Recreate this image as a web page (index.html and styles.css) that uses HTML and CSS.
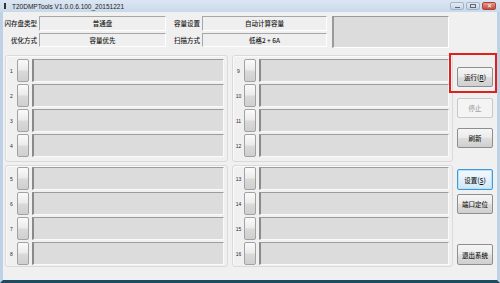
FILE: index.html
```html
<!DOCTYPE html>
<html lang="zh-CN">
<head>
  <meta charset="UTF-8">
  <title>T20DMPTools</title>
  <link rel="stylesheet" href="styles.css">
</head>
<body>
  <div class="window">
    <!-- barra de titulo -->
    <div class="titlebar">
      <span class="app-icon"></span>
      <span class="title">T20DMPTools V1.0.0.6.100_20151221</span>
      <div class="controls">
        <span class="ctl"><i class="ico-min"></i></span>
        <span class="ctl"><i class="ico-max"></i></span>
        <span class="ctl close"><i class="ico-x">✕</i></span>
      </div>
    </div>

    <div class="client">
      <!-- ajustes -->
      <div class="settings">
        <span class="lbl">闪存盘类型</span>
        <div class="field">普通盘</div>
        <span class="lbl">容量设置</span>
        <div class="field">自动计算容量</div>
        <div class="status-box"></div>
        <span class="lbl">优化方式</span>
        <div class="field">容量优先</div>
        <span class="lbl">扫描方式</span>
        <div class="field">低格2 + 6A</div>
      </div>

      <div class="main">
        <div class="ports">
          <div class="group">
            <div class="port"><span class="num">1</span><span class="knob"></span><span class="bar"></span></div>
            <div class="port"><span class="num">2</span><span class="knob"></span><span class="bar"></span></div>
            <div class="port"><span class="num">3</span><span class="knob"></span><span class="bar"></span></div>
            <div class="port"><span class="num">4</span><span class="knob"></span><span class="bar"></span></div>
          </div>
          <div class="group">
            <div class="port"><span class="num">9</span><span class="knob"></span><span class="bar"></span></div>
            <div class="port"><span class="num">10</span><span class="knob"></span><span class="bar"></span></div>
            <div class="port"><span class="num">11</span><span class="knob"></span><span class="bar"></span></div>
            <div class="port"><span class="num">12</span><span class="knob"></span><span class="bar"></span></div>
          </div>
          <div class="group low">
            <div class="port"><span class="num">5</span><span class="knob"></span><span class="bar"></span></div>
            <div class="port"><span class="num">6</span><span class="knob"></span><span class="bar"></span></div>
            <div class="port"><span class="num">7</span><span class="knob"></span><span class="bar"></span></div>
            <div class="port"><span class="num">8</span><span class="knob"></span><span class="bar"></span></div>
          </div>
          <div class="group low">
            <div class="port"><span class="num">13</span><span class="knob"></span><span class="bar"></span></div>
            <div class="port"><span class="num">14</span><span class="knob"></span><span class="bar"></span></div>
            <div class="port"><span class="num">15</span><span class="knob"></span><span class="bar"></span></div>
            <div class="port"><span class="num">16</span><span class="knob"></span><span class="bar"></span></div>
          </div>
        </div>

        <!-- botones -->
        <div class="actions">
          <button class="btn b-run">运行(<u>R</u>)</button>
          <button class="btn b-stop" disabled>停止</button>
          <button class="btn b-refresh">刷新</button>
          <button class="btn b-setup focus">设置(<u>S</u>)</button>
          <button class="btn b-port">端口定位</button>
          <button class="btn b-exit">退出系统</button>
        </div>
      </div>
    </div>

    <div class="highlight"></div>
  </div>
</body>
</html>
```

FILE: styles.css
```css
body {
  margin: 0;
  padding: 0;
  font-family: "Liberation Sans", "Noto Sans CJK SC", sans-serif;
  color: #1a1a1a;
  background: #1e4a60;
}

.window {
  position: relative;
  width: 500px;
  height: 283px;
  display: flex;
  flex-direction: column;
  overflow: hidden;
}

/* barra de titulo */
.titlebar {
  height: 12px;
  background: linear-gradient(#dbe6f2, #c9d9ea);
  display: flex;
  align-items: center;
  font-size: 6.5px;
  color: #222;
}

.app-icon {
  width: 2px;
  height: 6px;
  background: #333;
  margin: 0 6px 0 4px;
}

.title {
  flex: 1;
}

.controls {
  display: flex;
  gap: 2px;
  margin-right: 4px;
  align-self: flex-start;
  margin-top: 2px;
}

.ctl {
  width: 14px;
  height: 8px;
  border: 1px solid #9fb4cb;
  border-radius: 2px;
  background: linear-gradient(#e4ecf6, #c3d3e6);
  box-sizing: border-box;
  display: flex;
  align-items: center;
  justify-content: center;
}

.ctl.close {
  background: linear-gradient(#e49a8c, #c84a3a);
  border-color: #a8463a;
}

.ico-min {
  width: 5px;
  height: 1px;
  background: #666;
  margin-top: 2px;
}

.ico-max {
  width: 4px;
  height: 2px;
  border: 1px solid #666;
}

.ico-x {
  font-style: normal;
  font-size: 6px;
  color: #fff;
  line-height: 1;
}

.client {
  flex: 1;
  background: #f0f0f0;
  border-left: 3px solid #bfd1e4;
  border-right: 3px solid #bfd1e4;
  border-bottom: 3px solid #1f4b62;
}

/* ajustes */
.settings {
  display: grid;
  grid-template-columns: 36px 127px 36px 125px 122px;
  grid-template-rows: 15px 14px;
  row-gap: 2px;
  padding-top: 4px;
  font-family: "Noto Sans CJK SC", sans-serif;
  font-size: 6.5px;
  font-weight: 500;
}

.lbl {
  text-align: right;
  padding-right: 2px;
  line-height: 14px;
  white-space: nowrap;
}

.field {
  border-top: 1px solid #a7a7a7;
  border-left: 1px solid #a7a7a7;
  border-bottom: 1px solid #fff;
  border-right: 1px solid #fff;
  background: #efefef;
  text-align: center;
  line-height: 13px;
  white-space: nowrap;
}

.status-box {
  grid-row: 1 / span 2;
  grid-column: 5;
  margin-left: 5px;
  height: 32px;
  background: #dcdcdc;
  border-top: 1px solid #9a9a9a;
  border-left: 2px solid #9a9a9a;
  border-right: 1px solid #fff;
  border-bottom: 1px solid #fff;
  box-sizing: border-box;
}

.main {
  display: flex;
  padding-left: 2px;
  margin-top: 8px;
}

.ports {
  display: grid;
  grid-template-columns: 223px 221px;
  grid-template-rows: 107px 102px;
  column-gap: 4px;
  row-gap: 3px;
}

.group {
  border: 1px solid #dadada;
  border-radius: 3px;
  box-shadow: inset 1px 1px 0 #fafafa;
  padding: 3px 3px 0 0;
  display: flex;
  flex-direction: column;
  gap: 2px;
  box-sizing: border-box;
}

.group.low {
  padding-top: 1px;
}

.port {
  display: flex;
  align-items: center;
  height: 23px;
}

.num {
  width: 11px;
  text-align: center;
  font-size: 5px;
  color: #2a2a2a;
}

.knob {
  width: 12px;
  height: 23px;
  box-sizing: border-box;
  border: 1px solid #a2a2a2;
  border-radius: 2px;
  background: linear-gradient(#fafafa 0%, #ececec 45%, #d9d9d9 55%, #cfcfcf 100%);
}

.bar {
  flex: 1;
  height: 23px;
  margin-left: 3px;
  box-sizing: border-box;
  background: #dcdcdc;
  border-top: 1px solid #9c9c9c;
  border-left: 2px solid #8a8a8a;
  border-right: 1px solid #fafafa;
  border-bottom: 1px solid #fafafa;
}

/* botones */
.actions {
  display: flex;
  flex-direction: column;
  margin-left: 4px;
  width: 36px;
}

.btn {
  width: 36px;
  height: 20px;
  padding: 0;
  font-family: "Noto Sans CJK SC", sans-serif;
  font-size: 6.5px;
  font-weight: 500;
  color: #1a1a1a;
  border: 1px solid #8e8e8e;
  border-radius: 2px;
  background: linear-gradient(#f6f6f6 0%, #ebebeb 48%, #dddddd 52%, #cfcfcf 100%);
  white-space: nowrap;
}

.btn:disabled {
  color: #a6a6a6;
  border-color: #c8c8c8;
  background: #f4f4f4;
}

.btn.focus {
  border-color: #3c9ad6;
  box-shadow: inset 0 0 0 1px #b8e0f8;
  background: linear-gradient(#f2f9fe, #e3f1fb 50%, #cfe7f7 100%);
}

.b-run { margin-top: 12px; }
.b-stop { margin-top: 11px; }
.b-refresh { margin-top: 10px; }
.b-setup { margin-top: 21px; height: 21px; }
.b-port { margin-top: 4px; }
.b-exit { margin-top: 30px; height: 21px; }

/* marca roja de la captura */
.highlight {
  position: absolute;
  left: 449px;
  top: 53px;
  width: 48px;
  height: 40px;
  border: 2px solid #e0201e;
  box-sizing: border-box;
}
```
